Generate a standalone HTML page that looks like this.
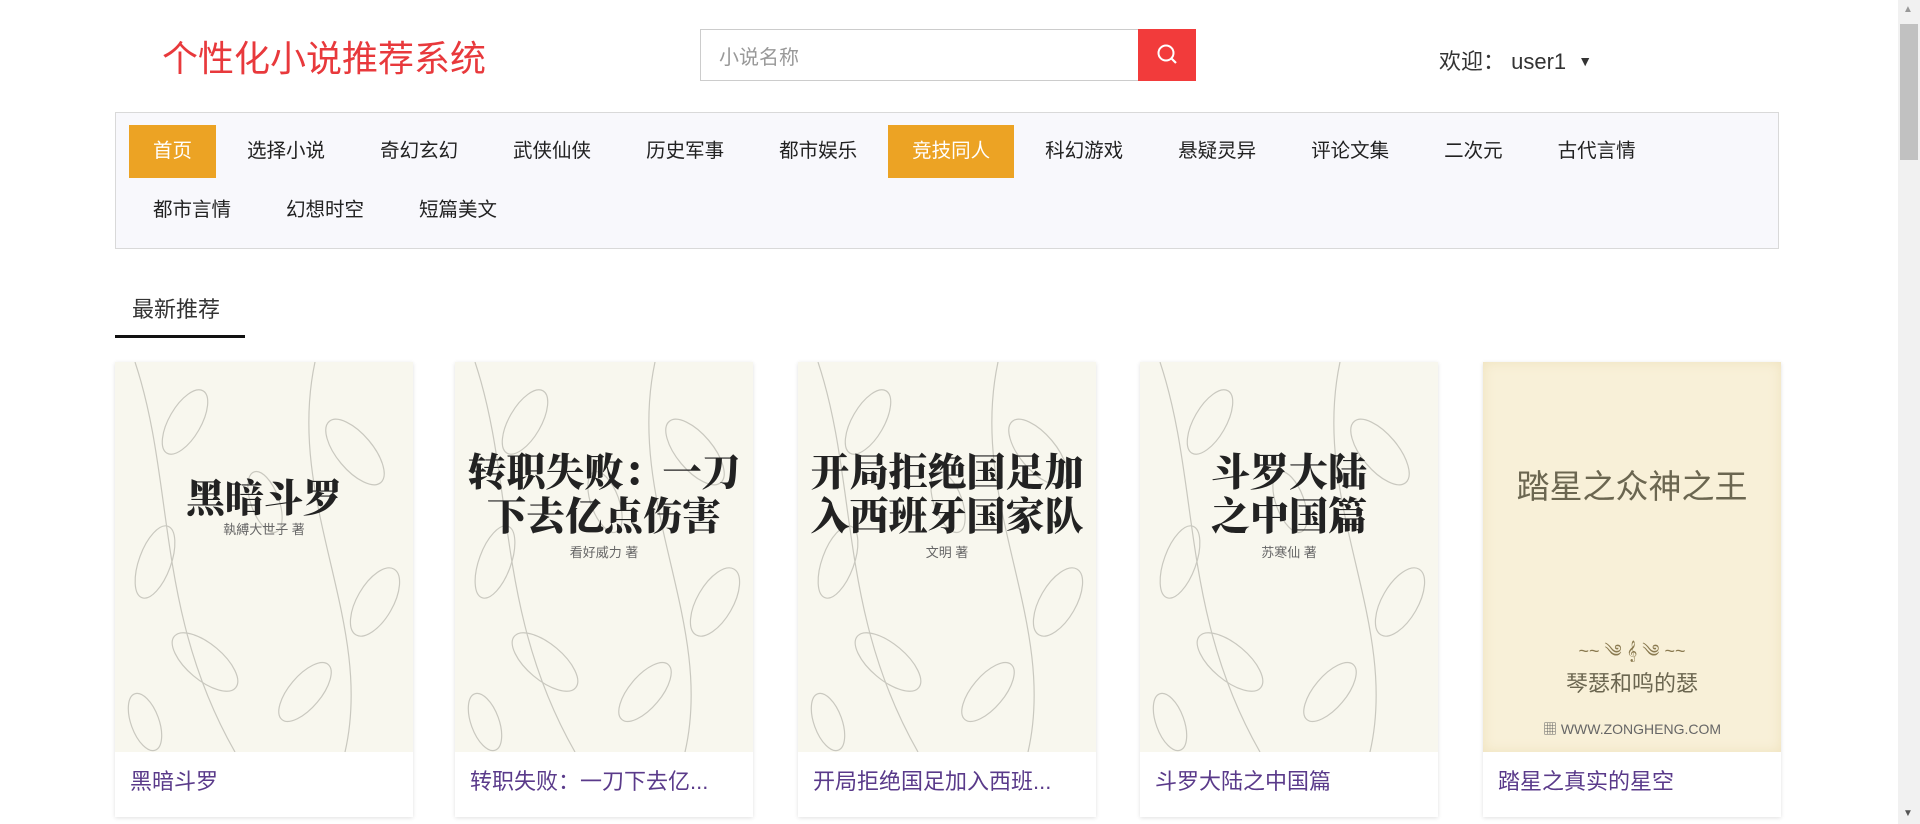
<!DOCTYPE html>
<html><head><meta charset="utf-8"><style>
*{margin:0;padding:0;box-sizing:border-box}
body{width:1920px;height:824px;overflow:hidden;background:#fff;font-family:"Liberation Sans","Noto Sans CJK SC",sans-serif;position:relative}
.a{position:absolute}
.title{left:162px;top:30px;font-size:36px;color:#e8393c;white-space:nowrap}
.search{left:700px;top:29px;width:438px;height:52px;border:1px solid #ccc;border-right:none;font-size:20px;color:#999;padding:17px 18px 0;line-height:22px}
.btn{left:1138px;top:29px;width:58px;height:52px;background:#f23b3b}
.user{left:1439px;top:44px;font-size:22px;color:#333;white-space:nowrap}
.nav{left:115px;top:112px;width:1664px;height:137px;background:#f8f8fc;border:1px solid #d9d9d9;padding:12px 0 0 13px;display:flex;flex-wrap:wrap;align-content:flex-start;row-gap:3px}
.nav span{display:block;height:53px;line-height:53px;padding:0 24px;margin-right:7px;font-size:19.5px;color:#222}
.nav span.on{background:#eca324;color:#fff}
.nav i{flex-basis:100%;height:0}
.sec{left:132px;top:292px;font-size:22px;color:#333}
.line{left:115px;top:335px;width:130px;height:3px;background:#111}
.card{top:362px;width:298px;height:455px;background:#fff;box-shadow:0 1px 4px rgba(0,0,0,.12)}
.img{position:absolute;left:0;top:0;width:298px;height:390px;background:#f8f7ee;overflow:hidden}
.img svg{position:absolute;left:0;top:0}
.ct{position:absolute;width:100%;text-align:center;font-family:"Noto Serif CJK SC",serif;font-weight:900;font-size:39px;color:#222;line-height:44px;white-space:nowrap}
.au{position:absolute;width:100%;text-align:center;font-size:13px;color:#666}
.cap{position:absolute;left:15px;top:402px;font-size:22px;color:#5a3a8a;white-space:nowrap}
.sb{left:1898px;top:0;width:22px;height:824px;background:#f1f1f1}
.th{left:1900px;top:24px;width:18px;height:136px;background:#c1c1c1}
</style></head><body>
<div class="a title">个性化小说推荐系统</div>
<div class="a search">小说名称</div>
<div class="a btn"><svg width="58" height="52"><circle cx="28" cy="24" r="7.5" fill="none" stroke="#fff" stroke-width="2"/><line x1="33.5" y1="29.5" x2="38" y2="34" stroke="#fff" stroke-width="2.2"/></svg></div>
<div class="a user">欢迎：&nbsp;user1 <span style="font-size:14px;position:relative;top:-3px;margin-left:6px">▼</span></div>
<div class="a nav">
<span class="on">首页</span><span>选择小说</span><span>奇幻玄幻</span><span>武侠仙侠</span><span>历史军事</span><span>都市娱乐</span><span class="on">竞技同人</span><span>科幻游戏</span><span>悬疑灵异</span><span>评论文集</span><span>二次元</span><span>古代言情</span><i></i><span>都市言情</span><span>幻想时空</span><span>短篇美文</span>
</div>
<div class="a sec">最新推荐</div>
<div class="a line"></div>

<svg width="0" height="0" style="position:absolute"><defs><g id="lv" fill="none" stroke="#c9c8bf" stroke-width="1.2"><path d="M20 0 C60 120 40 250 120 390"/><path d="M200 0 C170 140 260 260 230 390"/><ellipse cx="70" cy="60" rx="16" ry="36" transform="rotate(30 70 60)"/><ellipse cx="240" cy="90" rx="18" ry="40" transform="rotate(-40 240 90)"/><ellipse cx="40" cy="200" rx="16" ry="38" transform="rotate(20 40 200)"/><ellipse cx="150" cy="140" rx="14" ry="32" transform="rotate(-20 150 140)"/><ellipse cx="260" cy="240" rx="18" ry="38" transform="rotate(30 260 240)"/><ellipse cx="90" cy="300" rx="18" ry="40" transform="rotate(-50 90 300)"/><ellipse cx="190" cy="330" rx="16" ry="36" transform="rotate(40 190 330)"/><ellipse cx="30" cy="360" rx="14" ry="30" transform="rotate(-20 30 360)"/></g></defs></svg>

<div class="a card" style="left:115px"><div class="img"><svg width="298" height="390"><use href="#lv"/></svg>
<div class="ct" style="top:112px">黑暗斗罗</div><div class="au" style="top:157px">執縛大世子 著</div></div><div class="cap">黑暗斗罗</div></div>

<div class="a card" style="left:455px"><div class="img"><svg width="298" height="390"><use href="#lv"/></svg>
<div class="ct" style="top:86px">转职失败：一刀</div><div class="ct" style="top:130px">下去亿点伤害</div><div class="au" style="top:180px">看好威力 著</div></div><div class="cap">转职失败：一刀下去亿...</div></div>

<div class="a card" style="left:798px"><div class="img"><svg width="298" height="390"><use href="#lv"/></svg>
<div class="ct" style="top:86px">开局拒绝国足加</div><div class="ct" style="top:130px">入西班牙国家队</div><div class="au" style="top:180px">文明 著</div></div><div class="cap">开局拒绝国足加入西班...</div></div>

<div class="a card" style="left:1140px"><div class="img"><svg width="298" height="390"><use href="#lv"/></svg>
<div class="ct" style="top:86px">斗罗大陆</div><div class="ct" style="top:130px">之中国篇</div><div class="au" style="top:180px">苏寒仙 著</div></div><div class="cap">斗罗大陆之中国篇</div></div>

<div class="a card" style="left:1483px"><div class="img" style="background:#f8f0d8;box-shadow:inset 0 0 12px #efe2bd">
<div class="au" style="top:98px;font-size:33px;color:#6b6650">踏星之众神之王</div>
<div class="au" style="top:270px;font-size:18px;color:#8a7a50">~~ ༄ 𝄞 ༄ ~~</div>
<div class="au" style="top:304px;font-size:22px;color:#6b6650">琴瑟和鸣的瑟</div>
<div class="au" style="top:357px;font-size:14px;color:#666">▦ WWW.ZONGHENG.COM</div>
</div><div class="cap">踏星之真实的星空</div></div>

<div class="a sb"></div><div class="a th"></div>
<div class="a" style="left:1903px;top:4px;font-size:10px;color:#999">▲</div>
<div class="a" style="left:1903px;top:808px;font-size:10px;color:#555">▼</div>
</body></html>
